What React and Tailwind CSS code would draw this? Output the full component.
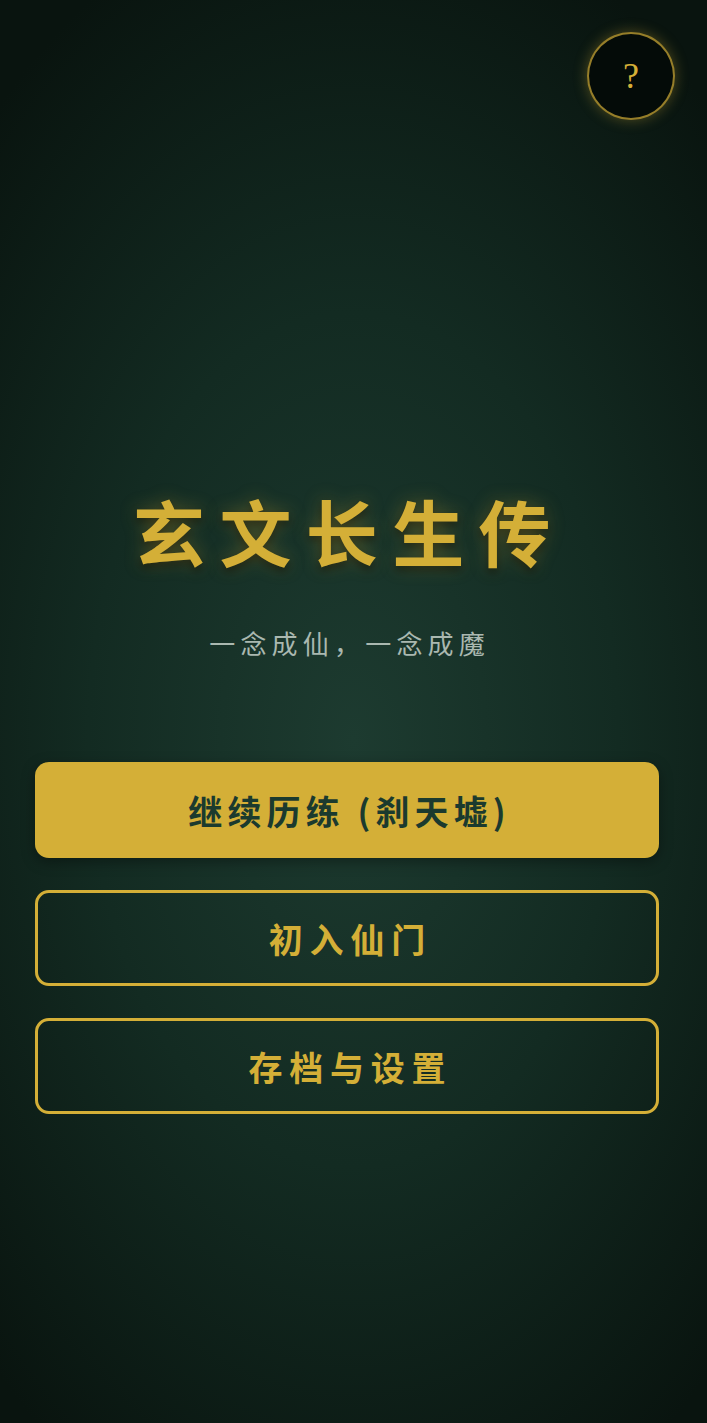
import React from 'react';

const menu = [
    { label: '继续历练 (刹天墟)', primary: true },
    { label: '初入仙门' },
    { label: '存档与设置' },
];

const App = () => {
    return (
        <div className="relative min-h-screen w-full overflow-hidden bg-[radial-gradient(ellipse_75%_60%_at_50%_52%,#1d3b30_0%,#132b22_50%,#09140f_100%)] font-['Noto_Sans_CJK_SC','Noto_Sans',sans-serif]">
            {/* help button */}
            <button className="absolute top-[32px] right-[32px] w-[88px] h-[88px] rounded-full bg-[#040b08] border-2 border-[#d4af37]/70 shadow-[0_0_14px_rgba(212,175,55,0.35)] flex items-center justify-center">
                <span className="text-[#d4af37] text-[36px] leading-none font-['Liberation_Serif',serif]">?</span>
            </button>

            <div className="w-[694px] flex flex-col items-center pt-[494px] pb-24">
                <h1 className="text-[72px] leading-none font-bold tracking-[0.2em] pl-[4px] text-[#d4af37] [text-shadow:0_0_18px_rgba(212,175,55,0.35),0_4px_8px_rgba(0,0,0,0.6)]">
                    玄文长生传
                </h1>
                <p className="mt-[67px] text-[26px] leading-none tracking-[0.2em] pl-[0.2em] text-[#aab8b0] font-['Liberation_Serif','Noto_Sans_CJK_SC',serif]">
                    一念成仙，一念成魔
                </p>

                <div className="w-full px-[35px] mt-[103px] flex flex-col gap-8">
                    {menu.map((item) => (
                        <button
                            key={item.label}
                            className={
                                item.primary
                                    ? 'h-[96px] rounded-[14px] bg-[#d4af37] text-[#1b3a2e] text-[34px] font-bold tracking-[0.15em] pl-[0.15em] shadow-[0_4px_14px_rgba(0,0,0,0.35)]'
                                    : 'h-[96px] rounded-[14px] border-[3px] border-[#d4af37] text-[#d4af37] text-[34px] font-bold tracking-[0.2em] pl-[0.2em]'
                            }
                        >
                            {item.label}
                        </button>
                    ))}
                </div>
            </div>
        </div>
    );
};

export default App;
